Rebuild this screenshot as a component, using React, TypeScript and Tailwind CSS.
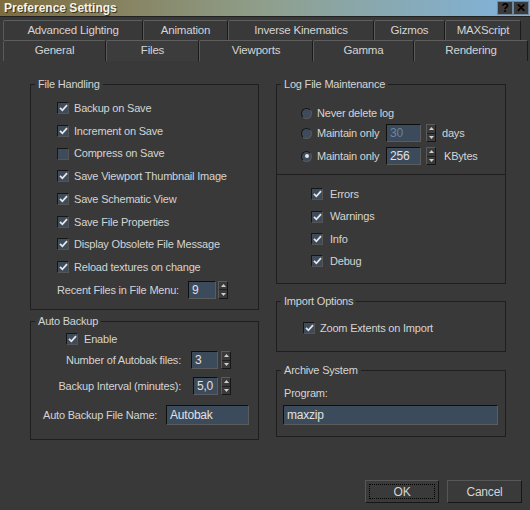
import React from "react";

const Check = ({ on = true }: { on?: boolean }) => (
  <span className="w-[12px] h-[12px] shrink-0 flex items-center justify-center bg-[#3d4b5b] border border-t-[#161616] border-l-[#161616] border-b-[#555] border-r-[#555]">
    {on && (
      <svg width="9" height="8" viewBox="0 0 9 8">
        <path d="M1 3.8 L3.4 6.3 L8 1.2" stroke="#e6e6e6" strokeWidth="1.8" fill="none" />
      </svg>
    )}
  </span>
);

const Radio = ({ on = false }: { on?: boolean }) => (
  <span className="w-[11px] h-[11px] shrink-0 rounded-full flex items-center justify-center bg-[#3d4b5a] border border-t-[#161616] border-l-[#161616] border-b-[#5a5a5a] border-r-[#5a5a5a]">
    {on && <span className="w-[4px] h-[4px] rounded-full bg-[#e6e6e6]" />}
  </span>
);

const Spin = () => (
  <div className="w-[10px] h-[18px] shrink-0 flex flex-col bg-[#3a3a3a] border border-t-[#5a5a5a] border-l-[#5a5a5a] border-b-[#161616] border-r-[#161616]">
    <div className="flex-1 flex items-center justify-center border-b border-[#1e1e1e]">
      <svg width="5" height="3" viewBox="0 0 5 3">
        <path d="M0 3 L2.5 0 L5 3Z" fill="#cfcfcf" />
      </svg>
    </div>
    <div className="flex-1 flex items-center justify-center">
      <svg width="5" height="3" viewBox="0 0 5 3">
        <path d="M0 0 L5 0 L2.5 3Z" fill="#cfcfcf" />
      </svg>
    </div>
  </div>
);

const Field = ({ value, className, dim }: { value: string; className: string; dim?: boolean }) => (
  <div
    className={`shrink-0 bg-[#3b4b5c] border border-t-[#0e0e0e] border-l-[#0e0e0e] border-b-[#5c5c5c] border-r-[#5c5c5c] pl-[3px] flex items-center text-[12px] ${
      dim ? "text-[#6d839b]" : "text-[#e0e0e0]"
    } ${className}`}
  >
    {value}
  </div>
);

const Group = ({ title, className, children }: { title: string; className: string; children?: React.ReactNode }) => (
  <fieldset className={`border border-[#1e1e1e] min-w-0 ${className}`}>
    <legend className="ml-[4px] px-[3px] leading-[14px]">{title}</legend>
    {children}
  </fieldset>
);

const CheckRow = ({ label, on = true }: { label: string; on?: boolean }) => (
  <div className="h-[22.7px] flex items-center gap-[5px] pl-[26px]">
    <Check on={on} />
    <span>{label}</span>
  </div>
);

const LogRow = ({ label }: { label: string }) => (
  <div className="h-[22.4px] flex items-center gap-[7px] pl-[34px]">
    <Check />
    <span>{label}</span>
  </div>
);

const Tab = ({ label, className }: { label: string; className: string }) => (
  <div
    className={`h-full flex items-center justify-center border-t border-l border-r border-t-[#5e5e5e] border-l-[#5a5a5a] border-r-[#1a1a1a] rounded-t-[2px] ${className}`}
  >
    {label}
  </div>
);

export default function App() {
  return (
    <div className="w-[530px] h-[510px] overflow-hidden whitespace-nowrap bg-[#393939] text-[#d4d4d4] text-[11px] tracking-[-0.2px] font-['Liberation_Sans',Arial,sans-serif]">
      {/* title bar */}
      <div className="h-[17px] flex items-center justify-between bg-linear-to-r from-[#7e6c3c] via-[#8f9f8c] to-[#7fb3de] border-b border-[#222]">
        <span className="pl-[4px] font-bold text-[12px] tracking-normal text-[#f6f3e6] [text-shadow:1px_1px_0_#3a3420]">
          Preference Settings
        </span>
        <div className="flex h-[14px] pr-[1px]">
          <span className="w-[16px] h-[14px] flex items-center justify-center bg-[#3b3b3b] border border-[#6f8aa0] text-black font-bold text-[12px] leading-none">
            ?
          </span>
          <span className="w-[16px] h-[14px] flex items-center justify-center bg-[#3b3b3b] border border-[#6f8aa0] text-black font-bold text-[12px] leading-none">
            ✕
          </span>
        </div>
      </div>

      {/* tabs */}
      <div className="pt-[3px] pl-[3px] text-[11.5px]">
        <div className="flex h-[20px]">
          <Tab label="Advanced Lighting" className="w-[140px]" />
          <Tab label="Animation" className="w-[85px]" />
          <Tab label="Inverse Kinematics" className="w-[146px]" />
          <Tab label="Gizmos" className="w-[71px]" />
          <Tab label="MAXScript" className="w-[76px]" />
        </div>
        <div className="flex h-[21px]">
          <Tab label="General" className="w-[103px]" />
          <Tab label="Files" className="w-[93px] bg-[#3c3c3c]" />
          <Tab label="Viewports" className="w-[114px]" />
          <Tab label="Gamma" className="w-[101px]" />
          <Tab label="Rendering" className="w-[114px]" />
        </div>
      </div>

      {/* panel */}
      <div className="flex gap-[17px] pl-[30px] pt-[16px]">
        {/* left column */}
        <div className="w-[229px] flex flex-col">
          <Group title="File Handling" className="h-[233px]">
            <div className="pt-[6px]">
              <CheckRow label="Backup on Save" />
              <CheckRow label="Increment on Save" />
              <CheckRow label="Compress on Save" on={false} />
              <CheckRow label="Save Viewport Thumbnail Image" />
              <CheckRow label="Save Schematic View" />
              <CheckRow label="Save File Properties" />
              <CheckRow label="Display Obsolete File Message" />
              <CheckRow label="Reload textures on change" />
              <div className="h-[22.7px] flex items-center pl-[26px]">
                <span className="w-[131px]">Recent Files in File Menu:</span>
                <Field value="9" className="w-[28px] h-[18px]" />
                <span className="w-[2px]" />
                <Spin />
              </div>
            </div>
          </Group>

          <Group title="Auto Backup" className="h-[126px] mt-[4px]">
            <div className="pt-[1px]">
              <div className="h-[20px] flex items-center gap-[6px] pl-[35px]">
                <Check />
                <span>Enable</span>
              </div>
              <div className="h-[20px] mt-[1px] flex items-center">
                <span className="w-[150px] text-right">Number of Autobak files:</span>
                <Field value="3" className="ml-[10px] w-[27px] h-[18px]" />
                <span className="w-[3px]" />
                <Spin />
              </div>
              <div className="h-[20px] mt-[6px] flex items-center">
                <span className="w-[150px] text-right">Backup Interval (minutes):</span>
                <Field value="5,0" className="ml-[12px] w-[25px] h-[18px]" />
                <span className="w-[3px]" />
                <Spin />
              </div>
              <div className="h-[20px] mt-[9px] flex items-center">
                <span className="w-[135px] pl-[12px]">Auto Backup File Name:</span>
                <Field value="Autobak" className="w-[83px] h-[20px]" />
              </div>
            </div>
          </Group>
        </div>

        {/* right column */}
        <div className="w-[230px] flex flex-col">
          <Group title="Log File Maintenance" className="h-[207px]">
            <div className="pt-[13px]">
              <div className="h-[18px] flex items-center pl-[24px]">
                <Radio />
                <span className="ml-[5px]">Never delete log</span>
              </div>
              <div className="h-[18px] mt-[2px] flex items-center pl-[24px]">
                <Radio />
                <span className="ml-[5px] w-[69px]">Maintain only</span>
                <Field value="30" dim className="w-[35px] h-[18px]" />
                <span className="w-[5px]" />
                <Spin />
                <span className="ml-[6px]">days</span>
              </div>
              <div className="h-[18px] mt-[5px] flex items-center pl-[24px]">
                <Radio on />
                <span className="ml-[5px] w-[69px]">Maintain only</span>
                <Field value="256" className="w-[35px] h-[18px]" />
                <span className="w-[5px]" />
                <Spin />
                <span className="ml-[8px]">KBytes</span>
              </div>
              <div className="mt-[9px] border-t border-[#1e1e1e]" />
              <div className="pt-[8px]">
                <LogRow label="Errors" />
                <LogRow label="Warnings" />
                <LogRow label="Info" />
                <LogRow label="Debug" />
              </div>
            </div>
          </Group>

          <Group title="Import Options" className="h-[58px] mt-[10px]">
            <div className="pt-[10px]">
              <div className="h-[20px] flex items-center gap-[5px] pl-[26px]">
                <Check />
                <span>Zoom Extents on Import</span>
              </div>
            </div>
          </Group>

          <Group title="Archive System" className="h-[74px] mt-[11px]">
            <div className="pt-[8px]">
              <div className="h-[16px] flex items-center pl-[7px]">Program:</div>
              <Field value="maxzip" className="mt-[4px] ml-[6px] w-[215px] h-[20px]" />
            </div>
          </Group>
        </div>
      </div>

      {/* buttons */}
      <div className="flex justify-end gap-[8px] pr-[8px] mt-[40px] text-[12px]">
        <button className="w-[74px] h-[23px] p-[3px] bg-[#3a3a3a] border border-t-[#575757] border-l-[#575757] border-b-[#161616] border-r-[#161616] text-[#d4d4d4]">
          <span className="w-full h-full flex items-center justify-center border border-dotted border-black">OK</span>
        </button>
        <button className="w-[75px] h-[23px] bg-[#3a3a3a] border border-t-[#575757] border-l-[#575757] border-b-[#161616] border-r-[#161616] text-[#d4d4d4]">
          Cancel
        </button>
      </div>
    </div>
  );
}
